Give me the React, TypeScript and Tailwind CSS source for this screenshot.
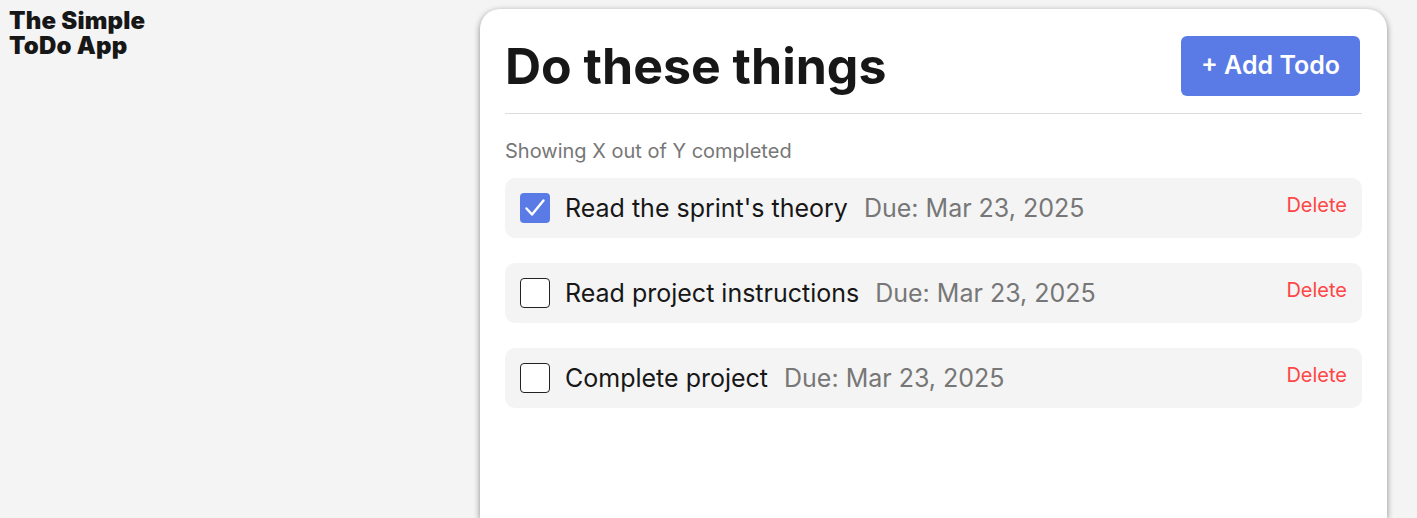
import React from "react";

interface Todo {
  id: number;
  title: string;
  due: string;
  done: boolean;
}

const todos: Todo[] = [
  { id: 1, title: "Read the sprint's theory", due: "Mar 23, 2025", done: true },
  { id: 2, title: "Read project instructions", due: "Mar 23, 2025", done: false },
  { id: 3, title: "Complete project", due: "Mar 23, 2025", done: false },
];

const TodoRow: React.FC<{ todo: Todo }> = ({ todo }) => (
  <li className="flex items-start justify-between rounded-[10px] bg-[#f4f4f4] px-[15px] py-[15px]">
    <div className="flex items-center gap-[15px]">
      {todo.done ? (
        <span className="flex h-[30px] w-[30px] items-center justify-center rounded-[4px] bg-[#5a7be6]">
          <svg width="24" height="24" viewBox="0 0 24 24" fill="none" stroke="white" strokeWidth="2.4" strokeLinecap="round" strokeLinejoin="round">
            <path d="M3.5 12.5l5.5 6L20.5 4.5" />
          </svg>
        </span>
      ) : (
        <span className="h-[30px] w-[30px] rounded-[4px] border border-[#222] bg-white" />
      )}
      <span className="text-[25px] leading-[30px] text-[#171717]">
        {todo.title}
        <span className="ml-[16px] text-[#777]">Due: {todo.due}</span>
      </span>
    </div>
    <button className="text-[20px] leading-[24px] text-[#ff4646]">Delete</button>
  </li>
);

export default function App() {
  return (
    <div className="flex min-h-[518px] bg-[#f4f4f4] font-['Inter',sans-serif]">
      <aside className="w-[480px] shrink-0 px-[9px] pt-[8px]">
        <h2 className="text-[24px] font-black leading-[25px] tracking-[0.2px] text-[#171717]">
          The Simple
          <br />
          ToDo App
        </h2>
      </aside>
      <main className="mr-[30px] mt-[9px] flex-1 rounded-t-[20px] bg-white px-[25px] pt-[27px] shadow-[0_2px_6px_rgba(0,0,0,0.45)]">
        <div className="flex items-start justify-between border-b border-[#ddd] pb-[17px]">
          <h1 className="text-[50px] font-bold leading-[60px] text-[#171717]">Do these things</h1>
          <button className="mr-[2px] h-[60px] rounded-[6px] bg-[#5a7be6] px-[20px] text-[25px] font-semibold text-white">
            + Add Todo
          </button>
        </div>
        <p className="mt-[24px] text-[20px] leading-[26px] text-[#777]">Showing X out of Y completed</p>
        <ul className="mt-[14px] flex flex-col gap-[25px]">
          {todos.map((t) => (
            <TodoRow key={t.id} todo={t} />
          ))}
        </ul>
      </main>
    </div>
  );
}
